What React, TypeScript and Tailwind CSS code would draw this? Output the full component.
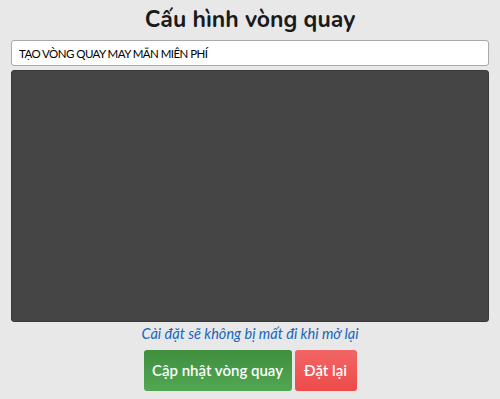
export default function App() {
  return (
    <div className="min-h-[399px] w-full bg-[#e8e8e8] font-['Lato','Open_Sans',sans-serif] flex flex-col items-center px-[11px]">
      <h1 className="mt-[4px] h-[32px] text-[23px] leading-[32px] font-bold text-[#1a1a1a] font-['Nunito','Open_Sans','Lato',sans-serif]">Cấu hình vòng quay</h1>
      <input
        className="mt-[4px] w-full h-[26px] rounded-[3px] border border-[#a9a9a9] bg-white px-[7px] text-[11.5px] tracking-[-0.55px] text-black outline-none"
        defaultValue="TẠO VÒNG QUAY MAY MẮN MIỄN PHÍ"
      />
      <textarea className="mt-[4px] w-full h-[252px] rounded-[3px] bg-[#454545] border border-[#3a3a3a] resize-none outline-none" />
      <p className="mt-[2px] text-[14.5px] leading-[20px] italic text-[#1565c0]">Cài đặt sẽ không bị mất đi khi mở lại</p>
      <div className="mt-[6px] flex gap-[3px]">
        <button className="h-[41px] w-[148px] rounded-[3px] bg-gradient-to-b from-[#3f8f3f] to-[#52a852] text-white text-[15px] font-semibold">Cập nhật vòng quay</button>
        <button className="h-[41px] w-[62px] rounded-[3px] bg-gradient-to-b from-[#f26565] to-[#ee4a4a] text-white text-[15px] font-semibold">Đặt lại</button>
      </div>
    </div>
  );
}
